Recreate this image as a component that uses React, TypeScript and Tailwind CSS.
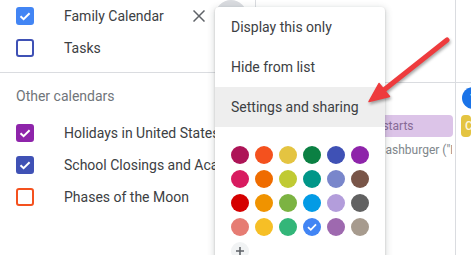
import React from 'react';

const swatches = [
  '#ad1457', '#f4511e', '#e4c441', '#0b8043', '#3f51b5', '#8e24aa',
  '#d81b60', '#ef6c00', '#c0ca33', '#009688', '#7986cb', '#795548',
  '#d50000', '#f09300', '#7cb342', '#039be5', '#b39ddb', '#616161',
  '#e67c73', '#f6bf26', '#33b679', '#4285f4', '#9e69af', '#a79b8e',
];
const selected = '#4285f4';

function Check({ color, checked }: { color: string; checked: boolean }) {
  return (
    <span
      className="flex h-[18px] w-[18px] shrink-0 items-center justify-center rounded-[3px] border-2"
      style={{ borderColor: color, backgroundColor: checked ? color : 'transparent' }}
    >
      {checked && (
        <svg width="14" height="14" viewBox="0 0 14 14" fill="none">
          <path d="M2.5 7.2 L5.6 10.2 L11.6 4.2" stroke="#fff" strokeWidth="2" />
        </svg>
      )}
    </span>
  );
}

function CalRow({ label, color, checked }: { label: string; color: string; checked: boolean }) {
  return (
    <div className="flex h-8 items-center pl-4">
      <Check color={color} checked={checked} />
      <span className="ml-[30px] whitespace-nowrap text-[14px] text-[#3c4043]">{label}</span>
    </div>
  );
}

export default function App() {
  return (
    <div className="relative flex h-[255px] w-[471px] overflow-hidden bg-white font-['Roboto','Liberation_Sans',sans-serif]">
      {/* sidebar */}
      <aside className="w-[256px] shrink-0 border-r border-[#dadce0]">
        <div className="flex h-8 items-center pl-4">
          <Check color="#4285f4" checked />
          <span className="ml-[30px] flex-1 whitespace-nowrap text-[14px] text-[#3c4043]">Family Calendar</span>
          <svg width="12" height="12" viewBox="0 0 12 12" className="mt-[0px]">
            <path d="M0.5 0.5 L11.5 11.5 M11.5 0.5 L0.5 11.5" stroke="#5f6368" strokeWidth="1.5" />
          </svg>
          <span className="ml-[10px] mr-2 h-8 w-8 rounded-full bg-[#dadce0]" />
        </div>
        <CalRow label="Tasks" color="#3f51b5" checked={false} />
        <div className="mt-2 border-t border-[#dadce0]" />
        <div className="flex h-[44px] items-center pl-4 pt-[2px] text-[14px] text-[#70757a]">Other calendars</div>
        <CalRow label="Holidays in United States" color="#8e24aa" checked />
        <CalRow label="School Closings and Academic Calendar" color="#3f51b5" checked />
        <CalRow label="Phases of the Moon" color="#f4511e" checked={false} />
      </aside>

      {/* month grid */}
      <main className="grid flex-1 grid-cols-[200px_1fr] grid-rows-[83px_1fr]">
        <div className="border-b border-r border-[#dadce0]" />
        <div className="border-b border-[#dadce0]" />
        <div className="overflow-hidden border-r border-[#dadce0] pt-1">
          <div className="flex h-[22px] items-center justify-center text-[12px] text-[#3c4043]">31</div>
          <div className="ml-[4px] mr-[2px] mt-[6px] flex h-[22px] items-center whitespace-nowrap rounded-[4px] bg-[#dcc4e8] pl-[8px] text-[12px] text-[#876a96]">
            Daylight Saving Time starts
          </div>
          <div className="ml-[2px] mr-[3px] mt-[3px] flex h-[20px] items-center overflow-hidden whitespace-nowrap pl-[6px] text-[12px] text-[#80868b]">
            <span className="h-2 w-2 shrink-0 rounded-full bg-[#c7a3d6]" />
            <span className="ml-1">12:30pm</span>
            <span className="ml-[6px]">National Hashburger ("Day")</span>
          </div>
        </div>
        <div className="overflow-hidden pt-1">
          <div className="ml-[6px] flex h-[22px] w-[22px] items-center justify-center rounded-full bg-[#1a73e8] text-[12px] font-medium text-white">
            1
          </div>
          <div className="ml-[5px] mt-[6px] flex h-[22px] items-center whitespace-nowrap rounded-[4px] bg-[#e4c441] pl-1 text-[12px] font-medium text-[#fdf6da]">
            Columbus Day
          </div>
        </div>
      </main>

      {/* context menu */}
      <div className="absolute left-[215px] top-[7px] w-[170px] rounded-[4px] bg-white pb-2 shadow-[0_2px_6px_2px_rgba(60,64,67,0.15),0_1px_2px_0_rgba(60,64,67,0.3)]">
        <div className="flex h-10 items-center pl-4 text-[14px] text-[#3c4043]">Display this only</div>
        <div className="flex h-10 items-center pl-4 text-[14px] text-[#3c4043]">Hide from list</div>
        <div className="flex h-10 items-center bg-[#eeeeee] pl-4 text-[14px] text-[#3c4043]">Settings and sharing</div>
        <div className="grid grid-cols-[repeat(6,18px)] gap-[6px] pl-4 pt-[19px]">
          {swatches.map(c => (
            <span key={c} className="flex h-[18px] w-[18px] items-center justify-center rounded-full" style={{ backgroundColor: c }}>
              {c === selected && (
                <svg width="12" height="12" viewBox="0 0 12 12" fill="none">
                  <path d="M2 6.2 L4.8 8.8 L10 3.4" stroke="#fff" strokeWidth="1.8" />
                </svg>
              )}
            </span>
          ))}
          <span className="flex h-[18px] w-[18px] items-center justify-center rounded-full bg-[#f1f3f4]">
            <svg width="10" height="10" viewBox="0 0 10 10">
              <path d="M5 1 V9 M1 5 H9" stroke="#5f6368" strokeWidth="1.6" />
            </svg>
          </span>
        </div>
      </div>

      {/* annotation arrow */}
      <svg
        className="pointer-events-none absolute left-0 top-0 drop-shadow-[1px_2px_1.5px_rgba(0,0,0,0.35)]"
        width="471"
        height="255"
        viewBox="0 0 471 255"
      >
        <path d="M447 40 L382 91.5" stroke="#ee3b3d" strokeWidth="5" strokeLinecap="round" />
        <path d="M369 101.5 L379 83.5 L389.5 96.5 Z" fill="#ee3b3d" stroke="#ee3b3d" strokeWidth="1.5" strokeLinejoin="round" />
      </svg>
    </div>
  );
}
